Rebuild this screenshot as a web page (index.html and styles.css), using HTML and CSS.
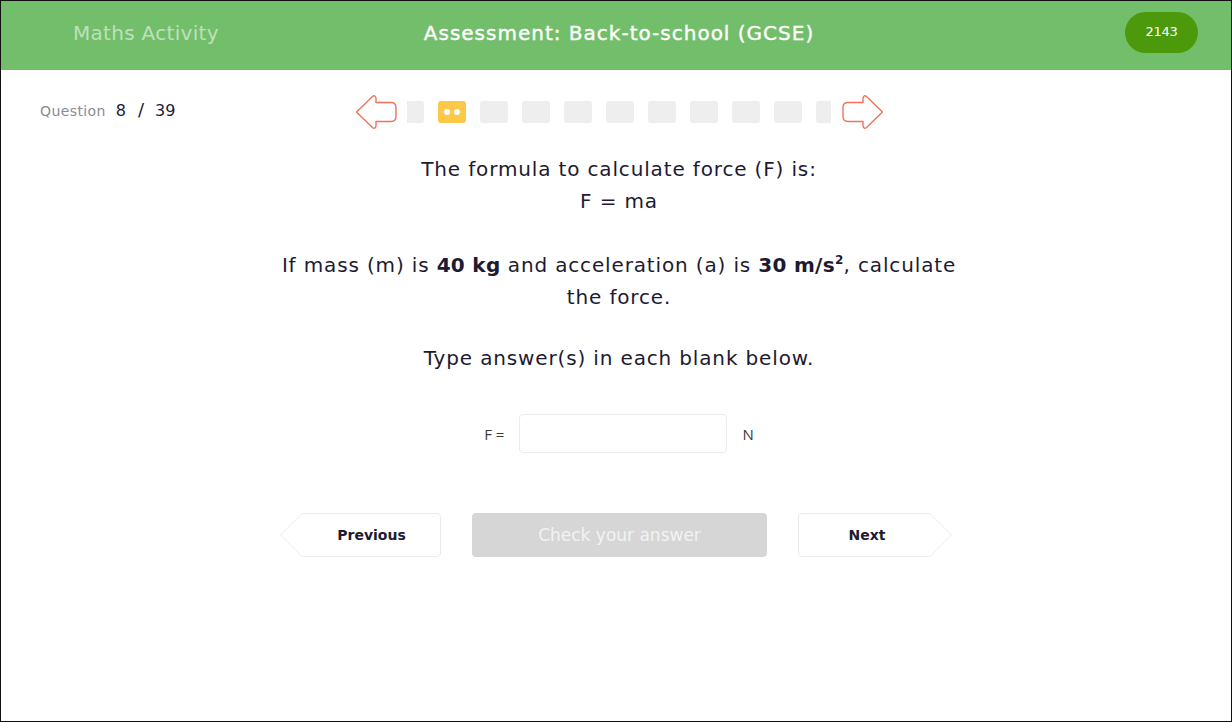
FILE: index.html
```html
<!DOCTYPE html>
<html lang="en">
<head>
<meta charset="utf-8">
<title>Maths Activity</title>
<link rel="stylesheet" href="styles.css">
</head>
<body>
<div class="frame">
  <header class="topbar">
    <div class="brand">Maths Activity</div>
    <div class="title">Assessment: Back-to-school (GCSE)</div>
    <div class="badge-wrap"><span class="badge">2143</span></div>
  </header>

  <div class="qrow">
    <div class="qcount"><span class="qlabel">Question</span><span class="qnum">8</span><span class="qsep">/</span><span class="qnum">39</span></div>
    <nav class="stepper">
      <button class="arrow" aria-label="Previous questions">
        <svg width="44" height="36" viewBox="0 0 44 36"><path d="M2.5 18 L18.5 2.5 Q21 0.5 22 4 L22 8.5 L37 8.5 Q42 8.5 42 13.5 L42 22.5 Q42 27.5 37 27.5 L22 27.5 L22 32 Q21 35.5 18.5 33.5 Z" fill="none" stroke="#f0735a" stroke-width="1.4" stroke-linejoin="round"/></svg>
      </button>
      <div class="steps">
        <div class="steps-track">
          <span class="step"></span>
          <span class="step active"><i></i><i></i></span>
          <span class="step"></span>
          <span class="step"></span>
          <span class="step"></span>
          <span class="step"></span>
          <span class="step"></span>
          <span class="step"></span>
          <span class="step"></span>
          <span class="step"></span>
          <span class="step"></span>
        </div>
      </div>
      <button class="arrow right" aria-label="Next questions">
        <svg width="44" height="36" viewBox="0 0 44 36"><path d="M2.5 18 L18.5 2.5 Q21 0.5 22 4 L22 8.5 L37 8.5 Q42 8.5 42 13.5 L42 22.5 Q42 27.5 37 27.5 L22 27.5 L22 32 Q21 35.5 18.5 33.5 Z" fill="none" stroke="#f0735a" stroke-width="1.4" stroke-linejoin="round" transform="translate(44 0) scale(-1 1)"/></svg>
      </button>
    </nav>
    <div class="spacer"></div>
  </div>

  <main class="question">
    <p class="para">The formula to calculate force (F) is:<br>F = ma</p>
    <p class="para">If mass (m) is <b>40 kg</b> and acceleration (a) is <b>30 m/s<sup>2</sup></b>, calculate<br>the force.</p>
    <p class="para instr">Type answer(s) in each blank below.</p>

    <div class="answer">
      <span class="lbl">F =</span>
      <input class="blank" type="text" aria-label="Force">
      <span class="lbl">N</span>
    </div>

    <div class="actions">
      <button class="btn prev">Previous</button>
      <button class="btn check">Check your answer</button>
      <button class="btn next">Next</button>
    </div>
  </main>
</div>
</body>
</html>
```

FILE: styles.css
```css
* { box-sizing: border-box; }
html, body { margin: 0; padding: 0; background: #fff; }
body { font-family: "DejaVu Sans", "Open Sans", sans-serif; color: #1d1a31; }

.frame {
  width: 1232px;
  height: 722px;
  border: 1px solid #111;
  overflow: hidden;
  background: #fff;
}

.topbar {
  height: 69px;
  padding-bottom: 6px;
  background: #72be6b;
  display: grid;
  grid-template-columns: 1fr auto 1fr;
  align-items: center;
}
.brand {
  padding-left: 72px;
  font-size: 20px;
  color: rgba(255,255,255,0.55);
  letter-spacing: 0.3px;
}
.title {
  font-size: 20px;
  font-weight: 400;
  color: #fff;
  -webkit-text-stroke: 0.4px #fff;
  letter-spacing: 1px;
  padding-left: 6px;
}
.badge-wrap { display: flex; justify-content: flex-end; padding-right: 33px; }
.badge {
  width: 73px;
  height: 41px;
  border-radius: 21px;
  background: #4c9a0c;
  color: #fff;
  font-size: 13px;
  display: flex;
  align-items: center;
  justify-content: center;
  letter-spacing: -0.3px;
  padding-bottom: 2px;
}

.qrow {
  display: grid;
  grid-template-columns: 1fr auto 1fr;
  align-items: center;
  margin-top: 24px;
  height: 34px;
}
.qcount { padding-left: 39px; display: flex; align-items: baseline; margin-top: -6px; }
.qlabel { font-size: 14px; color: #8b8a97; margin-right: 10px; letter-spacing: 0.4px; }
.qnum { font-size: 16px; color: #1d1a31; }
.qsep { font-size: 18px; margin: 0 11px 0 12px; color: #1d1a31; }

.stepper { display: flex; align-items: center; padding-left: 6px; }
.arrow {
  border: 0; background: none; padding: 0; margin: 0;
  width: 44px; height: 36px; display: block; cursor: pointer;
}
.arrow svg { display: block; }
.steps { width: 424px; overflow: hidden; margin: 0 10px 0 9px; }
.steps-track { display: flex; gap: 14px; margin-left: -11px; }
.step {
  flex: 0 0 28px;
  height: 22px;
  border-radius: 3px;
  background: #eeeeee;
  display: flex;
  align-items: center;
  justify-content: center;
  gap: 4px;
}
.step.active { background: #fec849; }
.step.active i { width: 6px; height: 6px; border-radius: 50%; background: #fff; display: block; }

.question { text-align: center; padding-left: 6px; margin-top: 25px; }
.para { font-size: 20px; line-height: 32px; margin: 0 0 32px; letter-spacing: 0.85px; }
.para b { font-weight: 700; letter-spacing: 0.3px; }
.para sup { font-size: 12px; line-height: 0; vertical-align: 8px; }
.instr { margin-top: -3px; margin-bottom: 0; }

.answer {
  margin-top: 40px;
  display: flex;
  justify-content: center;
  align-items: center;
  gap: 15px;
}
.lbl { font-family: "Open Sans", sans-serif; font-size: 15px; color: #3b3b3b; }
.blank {
  width: 208px; height: 39px;
  border: 1px solid #ececec;
  border-radius: 4px;
  background: #fff;
  outline: none;
}

.actions {
  margin-top: 60px;
  display: flex;
  justify-content: center;
  align-items: center;
  gap: 31px;
  margin-left: -6px;
}
.btn {
  height: 44px;
  border: 0;
  font-family: "DejaVu Sans", sans-serif;
  font-size: 14px;
  font-weight: 700;
  color: #1d1a31;
  background-color: transparent;
  background-repeat: no-repeat;
  background-size: 100% 100%;
  cursor: pointer;
}
.prev {
  width: 161px;
  padding-left: 28px;
  background-image: url("data:image/svg+xml,%3Csvg xmlns='http://www.w3.org/2000/svg' width='161' height='44' viewBox='0 0 161 44'%3E%3Cpath d='M22 0.5 H157 Q160.5 0.5 160.5 4 V40 Q160.5 43.5 157 43.5 H22 L1.5 23 Q0.5 22 1.5 21 Z' fill='%23fff' stroke='%23ebebeb'/%3E%3C/svg%3E");
}
.check {
  width: 295px;
  border-radius: 4px;
  background: #d6d6d6;
  color: #f2f2f2;
  font-size: 17px;
  font-weight: 400;
}
.next {
  width: 154px;
  padding-right: 22px;
  background-image: url("data:image/svg+xml,%3Csvg xmlns='http://www.w3.org/2000/svg' width='154' height='44' viewBox='0 0 154 44'%3E%3Cpath d='M4 0.5 H132 L152.5 21 Q153.5 22 152.5 23 L132 43.5 H4 Q0.5 43.5 0.5 40 V4 Q0.5 0.5 4 0.5 Z' fill='%23fff' stroke='%23ebebeb'/%3E%3C/svg%3E");
}
```
